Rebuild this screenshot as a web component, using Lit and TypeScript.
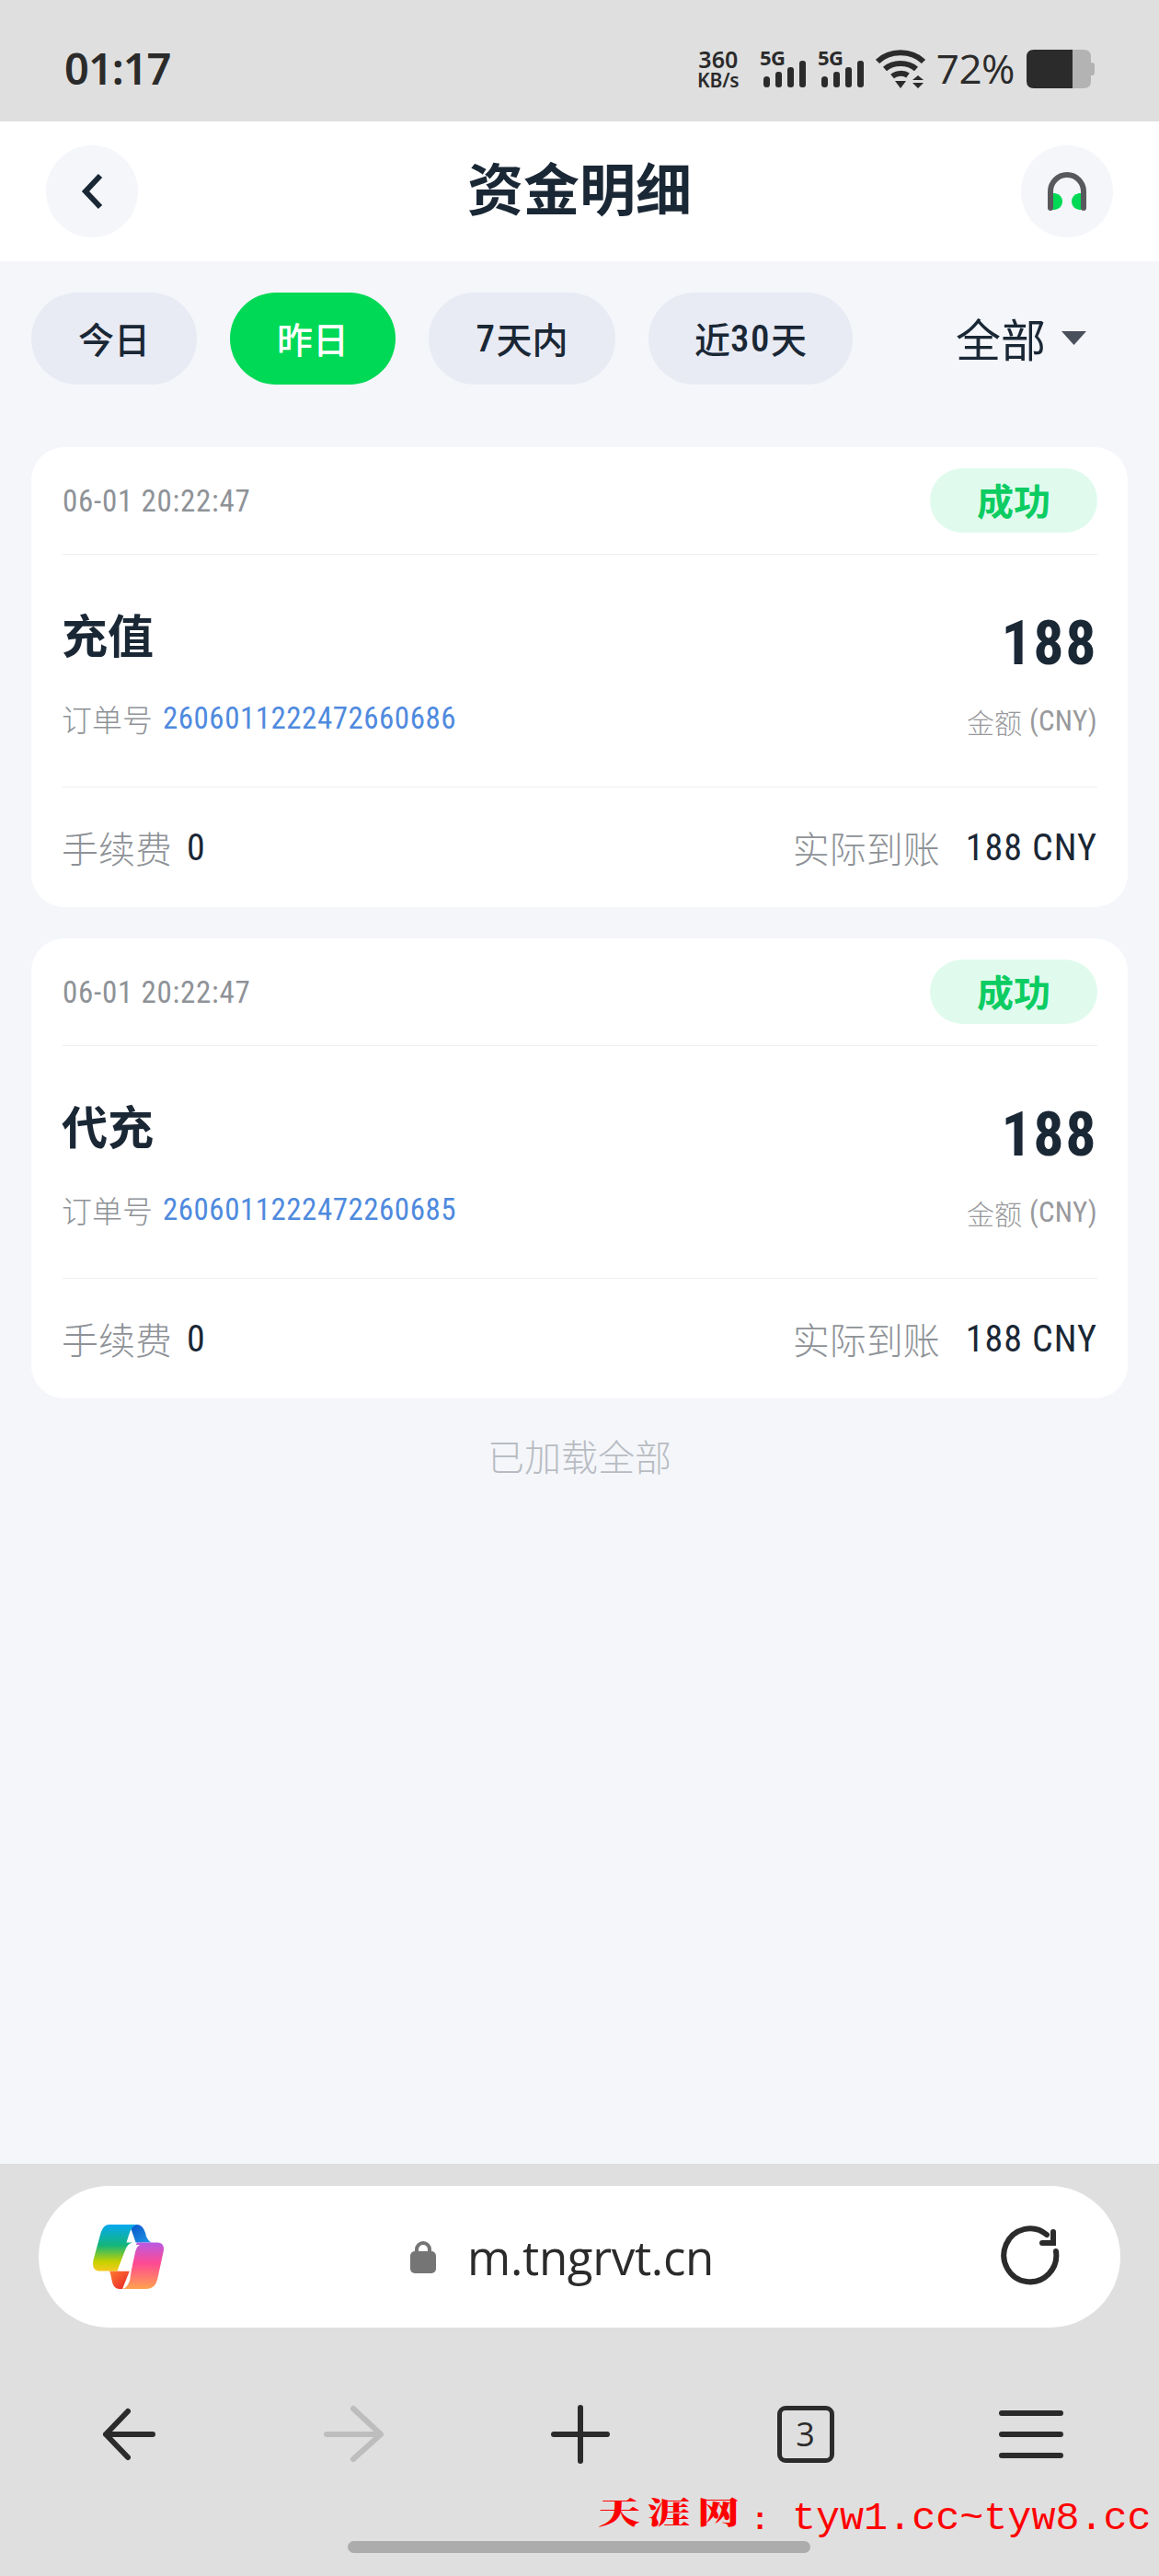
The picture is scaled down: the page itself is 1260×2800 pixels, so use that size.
import { LitElement, html, css, svg } from "lit";
import { customElement } from "lit/decorators.js";

const records = [
  { type: "充值", order: "2606011222472660686" },
  { type: "代充", order: "2606011222472260685" },
];

const signal = svg`
  <text class="sigtext" x="0" y="17">5G</text>
  <rect x="4" y="29" width="7" height="12" rx="3.5"/>
  <rect x="17" y="24" width="7" height="17" rx="3"/>
  <rect x="30" y="19" width="7" height="22" rx="3"/>
  <rect x="43" y="12" width="7" height="29" rx="3"/>`;

@customElement("app-root")
export class AppRoot extends LitElement {
  static styles = css`
    :host {
      display: flex;
      flex-direction: column;
      width: 1260px;
      height: 2800px;
      position: relative;
      overflow: hidden;
      background: #f4f6fa;
      font-family: "Noto Sans CJK SC", "Noto Sans", sans-serif;
      color: #1a2735;
    }
    svg { display: block; flex: none; }
    .status {
      height: 132px;
      flex: none;
      background: #dfdfdf;
      display: flex;
      align-items: center;
      justify-content: space-between;
      padding: 18px 70px 0 70px;
      box-sizing: border-box;
      color: #2b2b2b;
    }
    .clock { font: 600 47px/56px "Noto Sans", sans-serif; letter-spacing: -1px; margin-top: -3px; }
    .sys { display: flex; align-items: center; }
    .speed { width: 50px; margin-right: 20px; text-align: center; }
    .speed div { white-space: nowrap; }
    .speed .n { font: 600 25px/24px "Noto Sans", sans-serif; }
    .speed .u { font: 600 21px/22px "Noto Sans", sans-serif; letter-spacing: -0.2px; }
    .sig { fill: #2b2b2b; margin: -8px 13px 0 0; overflow: visible; }
    .sigtext { font: 700 22px "Noto Sans", sans-serif; letter-spacing: -0.5px; }
    .pct { font: 400 44px/56px "Open Sans", sans-serif; margin: -3px 13px 0 12px; letter-spacing: -0.5px; }
    .bar {
      height: 152px;
      flex: none;
      background: #fff;
      display: flex;
      align-items: center;
      justify-content: space-between;
      padding: 0 50px;
      box-sizing: border-box;
    }
    .round {
      width: 100px;
      height: 100px;
      border-radius: 50%;
      background: #f4f6fa;
      display: flex;
      align-items: center;
      justify-content: center;
    }
    .title { font-size: 61px; font-weight: 700; line-height: 80px; margin-top: -10px; }
    main { flex: 1; min-height: 0; padding-top: 34px; box-sizing: border-box; }
    .filters { display: flex; align-items: center; gap: 36px; padding: 0 79px 0 34px; height: 100px; }
    .chip {
      height: 100px;
      border-radius: 50px;
      background: #e8ebf4;
      display: flex;
      align-items: center;
      justify-content: center;
      font-size: 39px;
      font-weight: 500;
      box-sizing: border-box;
      padding-bottom: 2px;
    }
    .chip.w180 { width: 180px; }
    .chip.w203 { width: 203px; }
    .chip.w222 { width: 222px; }
    .chip.on { background: #00d955; color: #fff; }
    .latin { font: 500 41px/50px "Roboto", sans-serif; font-stretch: 75%; letter-spacing: 1.5px; margin-top: 2px; }
    .sel { margin-left: auto; display: flex; align-items: center; gap: 17px; font-size: 49px; line-height: 60px; padding-bottom: 2px; }
    .cards { display: flex; flex-direction: column; gap: 34px; padding: 68px 34px 0; }
    .card { background: #fff; border-radius: 36px; padding: 0 33px 0 34px; height: 500px; box-sizing: border-box; }
    .head {
      height: 117px;
      box-sizing: border-box;
      display: flex;
      align-items: center;
      justify-content: space-between;
      border-bottom: 1.5px solid #eceef1;
    }
    .time { font: 400 33px/40px "Roboto", sans-serif; font-stretch: 75%; color: #8e9297; letter-spacing: 0.75px; margin-top: 1px; }
    .badge {
      width: 182px;
      height: 70px;
      border-radius: 35px;
      background: #e0fbee;
      color: #0ccc62;
      font-size: 40px;
      font-weight: 700;
      display: flex;
      align-items: center;
      justify-content: center;
      padding-bottom: 3px;
      box-sizing: border-box;
    }
    .body {
      height: 253px;
      box-sizing: border-box;
      display: flex;
      justify-content: space-between;
      border-bottom: 1.5px solid #eceef1;
    }
    .kind { font-size: 50px; font-weight: 700; line-height: 60px; margin: 55px 0 0 -1px; }
    .order { margin-top: 43px; font-size: 33px; line-height: 40px; color: #8e9297; display: flex; gap: 11px; font-weight: 300; margin-left: -1px; }
    .order b { font: 400 33px/40px "Roboto", sans-serif; font-stretch: 75%; color: #4f8ade; letter-spacing: 0.5px; }
    .right { text-align: right; }
    .amt { font: 700 66px/70px "Roboto", sans-serif; font-stretch: 75%; margin-top: 62px; letter-spacing: 1.5px; }
    .sub { margin-top: 29px; font-size: 30px; line-height: 40px; color: #98999c; font-weight: 300; display: flex; justify-content: flex-end; gap: 8px; }
    .sub span { font: 400 31px/40px "Roboto", sans-serif; font-stretch: 75%; letter-spacing: 0.3px; }
    .foot { height: 130px; display: flex; align-items: center; justify-content: space-between; }
    .foot > div { display: flex; align-items: center; }
    .lab { font-size: 40px; line-height: 50px; color: #8e9297; font-weight: 300; margin-left: -1px; }
    .val { font: 400 40px/50px "Roboto", sans-serif; font-stretch: 75%; letter-spacing: 1px; margin-top: 2px; }
    .zero { margin-left: 16px; }
    .recv { margin-left: 28px; }
    .end { margin-top: 34px; text-align: center; font-size: 40px; line-height: 56px; color: #b8bcc2; font-weight: 300; }
    .dock { height: 448px; flex: none; background: #dfdfdf; padding-top: 24px; box-sizing: border-box; }
    .pill {
      margin: 0 42px;
      height: 154px;
      border-radius: 77px;
      background: #fff;
      display: flex;
      align-items: center;
      padding: 0 63px 0 59px;
    }
    .lock { margin-left: 268px; margin-right: 34px; }
    .url { font: 400 51px/60px "Open Sans", sans-serif; color: #2b2b2b; letter-spacing: -0.3px; }
    .reload { margin-left: auto; }
    .nav { display: grid; grid-template-columns: repeat(5, 245px); padding: 54px 18px 0; height: 124px; }
    .nav > div { display: flex; align-items: center; justify-content: center; position: relative; }
    .tab {
      width: 62px;
      height: 62px;
      box-sizing: border-box;
      border: 5.5px solid #2b2b2b;
      border-radius: 9px;
      display: flex;
      align-items: center;
      justify-content: center;
      font: 400 36px/40px "Open Sans", sans-serif;
      color: #2b2b2b;
    }
    .home { width: 503px; height: 13px; margin: 54px 0 0 378px; border-radius: 7px; background: #acacac; }
    .mark { position: absolute; left: 650px; top: 2702px; display: flex; align-items: baseline; color: #f00; white-space: nowrap; }
    .mark .cn { display: inline-block; font: 900 46px/54px "Noto Serif CJK SC", "Noto Sans CJK SC", serif; letter-spacing: 8px; transform: scaleY(0.72); }
    .mark .colon { font: 700 34px/54px "Liberation Mono", monospace; width: 49px; padding-left: 4px; box-sizing: border-box; }
    .mark .en { font: 400 43.4px/54px "Liberation Mono", monospace; }
  `;

  private renderCard(r: { type: string; order: string }) {
    return html`
      <section class="card">
        <div class="head">
          <span class="time">06-01 20:22:47</span>
          <span class="badge">成功</span>
        </div>
        <div class="body">
          <div>
            <div class="kind">${r.type}</div>
            <div class="order">订单号 <b>${r.order}</b></div>
          </div>
          <div class="right">
            <div class="amt">188</div>
            <div class="sub">金额 <span>(CNY)</span></div>
          </div>
        </div>
        <div class="foot">
          <div><span class="lab">手续费</span><span class="val zero">0</span></div>
          <div><span class="lab">实际到账</span><span class="val recv">188 CNY</span></div>
        </div>
      </section>
    `;
  }

  render() {
    return html`
      <header class="status">
        <span class="clock">01:17</span>
        <div class="sys">
          <div class="speed"><div class="n">360</div><div class="u">KB/s</div></div>
          <svg class="sig" width="50" height="50" viewBox="0 -8 50 50">${signal}</svg>
          <svg class="sig" width="50" height="50" viewBox="0 -8 50 50">${signal}</svg>
          <svg width="54" height="42" viewBox="0 0 54 42" fill="none" stroke="#2b2b2b" stroke-width="6">
            <path d="M2 13 C15 0 39 0 52 13"/>
            <path d="M10 21 C19 13 35 13 44 21"/>
            <path d="M18 29 C23 25 31 25 35 28"/>
            <path d="M21 34 H33 L27 42 Z" fill="#2b2b2b" stroke="none"/>
            <path d="M40 33 L46 28 L52 33 Z" fill="#2b2b2b" stroke="none"/>
            <path d="M40 36 H52 L46 42 Z" fill="#2b2b2b" stroke="none"/>
          </svg>
          <span class="pct">72%</span>
          <svg width="74" height="42" viewBox="0 0 74 42">
            <path d="M50 0 H62 Q70 0 70 8 V34 Q70 42 62 42 H50 Z" fill="#b3b3b3"/>
            <path d="M70 14 H71 Q74 14 74 17 V25 Q74 28 71 28 H70 Z" fill="#b3b3b3"/>
            <path d="M8 0 H50 V42 H8 Q0 42 0 34 V8 Q0 0 8 0 Z" fill="#2b2b2b"/>
          </svg>
        </div>
      </header>

      <div class="bar">
        <div class="round">
          <svg width="24" height="40" viewBox="0 0 24 40" fill="none" stroke="#1a2735" stroke-width="6">
            <path d="M21 3 L5 20 L21 37"/>
          </svg>
        </div>
        <div class="title">资金明细</div>
        <div class="round">
          <svg width="42" height="42" viewBox="0 0 42 42">
            <path d="M3 23 H8 Q16 25 16 32 Q16 39 8 41 H3 Z" fill="#00d955"/>
            <path d="M39 23 H34 Q26 25 26 32 Q26 39 34 41 H39 Z" fill="#00d955"/>
            <path d="M3 39 V21 A18 18 0 0 1 39 21 V39" fill="none" stroke="#58595c" stroke-width="6" stroke-linecap="round"/>
          </svg>
        </div>
      </div>

      <main>
        <div class="filters">
          <div class="chip w180">今日</div>
          <div class="chip w180 on">昨日</div>
          <div class="chip w203"><span class="latin">7</span>天内</div>
          <div class="chip w222">近<span class="latin">30</span>天</div>
          <div class="sel">全部
            <svg width="27" height="15" viewBox="0 0 27 15"><path d="M0 0 H27 L13.5 15 Z" fill="#4a4f5c"/></svg>
          </div>
        </div>
        <div class="cards">${records.map((r) => this.renderCard(r))}</div>
        <div class="end">已加载全部</div>
      </main>

      <footer class="dock">
        <div class="pill">
          <svg width="77" height="70" viewBox="97 85 228 208">
            <defs>
              <linearGradient id="cA" x1="0" y1="0" x2="0" y2="1">
                <stop offset="0" stop-color="#05a8f0"/>
                <stop offset=".45" stop-color="#14b57a"/>
                <stop offset=".8" stop-color="#c5d200"/>
                <stop offset="1" stop-color="#f5c81e"/>
              </linearGradient>
              <linearGradient id="cB" x1="0" y1="0" x2="0" y2="1">
                <stop offset="0" stop-color="#b85ae2"/>
                <stop offset=".45" stop-color="#ff4a92"/>
                <stop offset="1" stop-color="#ffa34e"/>
              </linearGradient>
              <linearGradient id="cC" x1="0" y1="0" x2="1" y2="1">
                <stop offset="0" stop-color="#0a50c8"/>
                <stop offset="1" stop-color="#1f9ae6"/>
              </linearGradient>
              <linearGradient id="cD" x1="0" y1="0" x2="1" y2="1">
                <stop offset="0" stop-color="#ff7a2e"/>
                <stop offset="1" stop-color="#e8222c"/>
              </linearGradient>
            </defs>
            <path d="M215 85 H238 Q258 85 266 112 Q270 135 285 143 H235 Z" fill="url(#cC)"/>
            <path d="M150 235 H215 L192 293 H180 Q162 293 157 262 Q155 245 150 235 Z" fill="url(#cD)"/>
            <path d="M150 85 H240 Q222 90 215 112 L205 143 H225 Q208 146 200 170 L175 235 H115 Q92 232 98 200 L122 112 Q130 85 150 85 Z" fill="url(#cA)"/>
            <path d="M240 143 H305 Q328 143 325 170 L305 262 Q298 293 270 293 H192 Q208 290 216 265 L230 170 Q233 150 240 143 Z" fill="url(#cB)"/>
            <path d="M222 150 H248 Q238 156 234 172 L220 235 H178 Q194 232 200 212 L212 172 Q216 156 222 150 Z" fill="#fff"/>
          </svg>
          <svg class="lock" width="28" height="35" viewBox="0 0 28 35">
            <path d="M7 13 V9 A7 7 0 0 1 21 9 V13" fill="none" stroke="#757575" stroke-width="4"/>
            <rect x="0" y="11" width="28" height="24" rx="5" fill="#757575"/>
          </svg>
          <span class="url">m.tngrvt.cn</span>
          <svg class="reload" width="70" height="70" viewBox="1085 2418 70 70" fill="none" stroke="#2b2b2b" stroke-width="6" stroke-linecap="round">
            <path d="M1148 2447 A28.500 29 0 1 1 1138 2429"/>
            <path d="M1145 2426 V2438 H1133"/>
          </svg>
        </div>
        <nav class="nav">
          <div>
            <svg width="70" height="70" viewBox="0 0 70 70" fill="none" stroke="#2b2b2b" stroke-width="6" stroke-linecap="round" stroke-linejoin="round">
              <path d="M60 35 H9 M33 10 L9 35 L33 60"/>
            </svg>
          </div>
          <div>
            <svg width="70" height="70" viewBox="0 0 70 70" fill="none" stroke="#bdbdbd" stroke-width="6" stroke-linecap="round" stroke-linejoin="round">
              <path d="M4 35 H63 M33 7 L63 35 L33 62"/>
            </svg>
          </div>
          <div>
            <svg width="64" height="64" viewBox="0 0 64 64" fill="none" stroke="#2b2b2b" stroke-width="6" stroke-linecap="round">
              <path d="M3 32 H61 M32 3 V61"/>
            </svg>
          </div>
          <div><div class="tab">3</div></div>
          <div>
            <svg width="70" height="52" viewBox="0 0 70 52" fill="none" stroke="#2b2b2b" stroke-width="6" stroke-linecap="round">
              <path d="M3 3 H67 M3 26 H67 M3 49 H67"/>
            </svg>
          </div>
        </nav>
        <div class="home"></div>
      </footer>

      <div class="mark"><span class="cn">天涯网</span><span class="colon">:</span><span class="en">tyw1.cc~tyw8.cc</span></div>
    `;
  }
}
